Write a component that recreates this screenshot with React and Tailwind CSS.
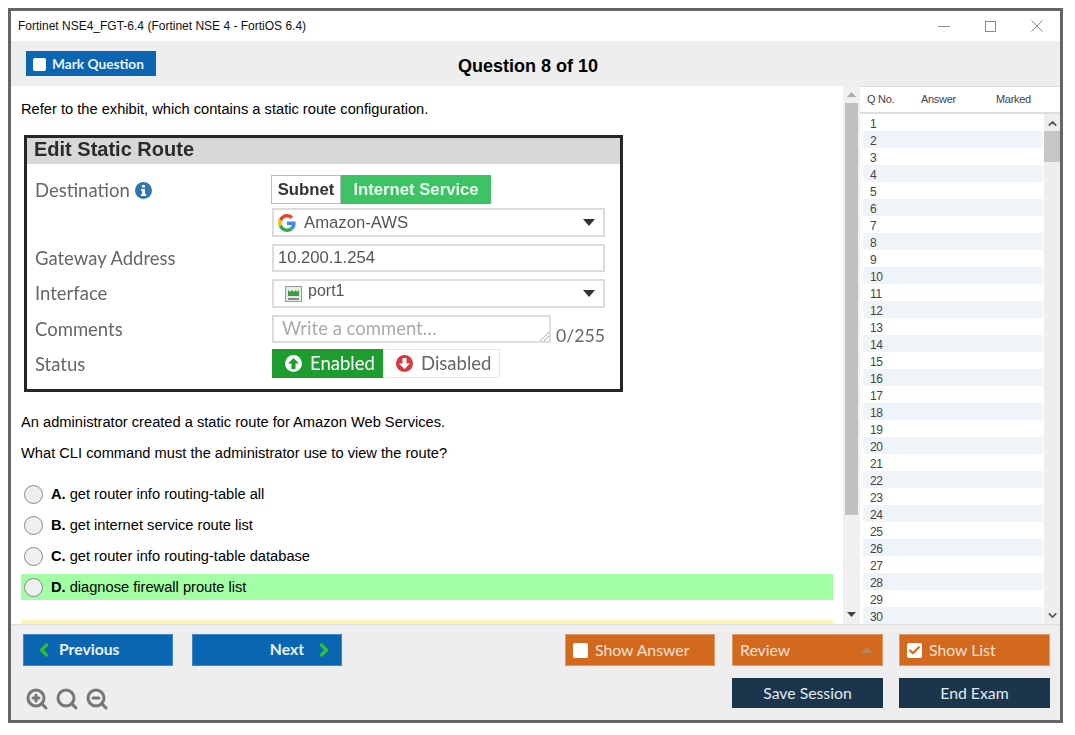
import React from "react";
import { ChevronLeft, ChevronRight, ChevronUp, ChevronDown, Check, Search, ZoomIn, ZoomOut } from "lucide-react";

const options = [
  ["A.", "get router info routing-table all"],
  ["B.", "get internet service route list"],
  ["C.", "get router info routing-table database"],
  ["D.", "diagnose firewall proute list"],
];

const rows = Array.from({ length: 30 }, (_, i) => i + 1);

const Caret = () => (
  <svg width="12" height="7" viewBox="0 0 12 7" className="ml-auto mr-[8px]">
    <path d="M0 0h12L6 7z" fill="#333" />
  </svg>
);

const Radio = () => <span className="h-[19px] w-[19px] shrink-0 rounded-full border border-[#8a8a8a] bg-[#efefef]" />;

const GoogleIcon = () => (
  <svg width="18" height="18" viewBox="0 0 48 48">
    <path fill="#ea4335" d="M24 9.5c3.5 0 6.700 1.200 9.200 3.600l6.900-6.900C35.900 2.400 30.400 0 24 0 14.600 0 6.500 5.400 2.600 13.200l8 6.200C12.500 13.700 17.800 9.500 24 9.500z" />
    <path fill="#4285f4" d="M47 24.500c0-1.600-.1-3.100-.4-4.500H24v9h12.900c-.6 3-2.200 5.500-4.700 7.200l7.700 6C44.400 37.900 47 31.800 47 24.500z" />
    <path fill="#fbbc05" d="M10.600 28.600A14.500 14.500 0 0 1 10.600 19.400l-8-6.200a24 24 0 0 0 0 21.600z" />
    <path fill="#34a853" d="M24 48c6.500 0 11.900-2.100 15.900-5.800l-7.700-6c-2.200 1.400-4.900 2.300-8.200 2.300-6.200 0-11.500-4.200-13.400-9.900l-8 6.200C6.500 42.600 14.600 48 24 48z" />
  </svg>
);

const Exhibit = () => (
  <div className="ml-[3px] mt-[17px] h-[257px] w-[599px] border-[3px] border-[#262626] bg-white font-['Lato',sans-serif] text-[18.5px] text-[#666] blur-[0.4px]">
    <div className="flex h-[26px] items-center bg-[#d8d8d8] pl-[7px] pb-[4px] font-['Liberation_Sans',sans-serif] text-[20px] font-bold text-[#2b2b2b]">
      Edit Static Route
    </div>
    <div className="flex pl-[8px] pt-[11px]">
      <div className="w-[237px] shrink-0">
        <div className="mt-[1px] flex h-[29px] items-center gap-[5px]">
          Destination
          <svg width="17" height="17" viewBox="0 0 17 17">
            <circle cx="8.500" cy="8.500" r="8.500" fill="#2f77ad" />
            <rect x="7" y="3" width="3" height="2.500" fill="#fff" />
            <path d="M6 7h4v5h1.200v2H6v-2h1.200V9H6z" fill="#fff" />
          </svg>
        </div>
        <div className="mt-[36px] flex h-[35px] items-center">Gateway Address</div>
        <div className="flex h-[36px] items-center">Interface</div>
        <div className="flex h-[35px] items-center">Comments</div>
        <div className="flex h-[35px] items-center">Status</div>
      </div>
      <div className="w-[333px] text-[#555]">
        <div className="-ml-[1px] flex h-[29px]">
          <div className="flex w-[70px] items-center justify-center border border-[#bbb] font-['Liberation_Sans',sans-serif] text-[16.7px] font-bold text-[#333]">Subnet</div>
          <div className="flex w-[150px] items-center justify-center bg-[#3cc464] font-['Liberation_Sans',sans-serif] text-[16.7px] font-bold text-[#eafff0]">Internet Service</div>
        </div>
        <div className="mt-[4px] flex h-[29px] items-center border-2 border-[#dcdcdc] pl-[4px] font-['Liberation_Sans',sans-serif] text-[16.7px]">
          <GoogleIcon />
          <span className="ml-[8px]">Amazon-AWS</span>
          <Caret />
        </div>
        <div className="mt-[7px] flex h-[28px] items-center border-2 border-[#dcdcdc] pl-[4px] font-['Liberation_Sans',sans-serif] text-[16.6px]">10.200.1.254</div>
        <div className="mt-[7px] flex h-[29px] items-center border-2 border-[#dcdcdc] pl-[11px] font-['Liberation_Sans',sans-serif] text-[16px]">
          <svg width="17" height="16" viewBox="0 0 17 16">
            <rect x="0.500" y="0.500" width="16" height="15" fill="#e4efe4" stroke="#999" />
            <path d="M3 10V4l2 2 2-2 1.500 2L11 4l1 2 2-2v6z" fill="#3c9a48" />
            <path d="M3 12h11v2H3z" fill="#888" />
          </svg>
          <span className="ml-[6px] -mt-[5px]">port1</span>
          <Caret />
        </div>
        <div className="mt-[7px] flex h-[34px] items-start">
          <div className="relative flex h-[28px] w-[279px] shrink-0 items-center border-2 border-[#dcdcdc] pl-[8px] text-[18.5px] text-[#aaa]">
            Write a comment…
            <svg width="9" height="9" viewBox="0 0 9 9" className="absolute bottom-0 right-0">
              <path d="M9 0 0 9M9 4 4 9" stroke="#aaa" />
            </svg>
          </div>
          <span className="ml-[5px] mt-[8px] text-[17.7px] text-[#666]">0/255</span>
        </div>
        <div className="flex h-[29px]">
          <div className="flex w-[111px] items-center gap-[8px] bg-[#1d9c30] pl-[13px] text-white">
            <svg width="17" height="17" viewBox="0 0 17 17">
              <circle cx="8.500" cy="8.500" r="8.500" fill="#fff" />
              <path d="M8.500 3 14 8.500h-3.500V14h-4V8.500H3z" fill="#1d9c30" />
            </svg>
            Enabled
          </div>
          <div className="flex w-[117px] items-center gap-[8px] border border-[#e8e8e8] pl-[12px] text-[#666]">
            <svg width="17" height="17" viewBox="0 0 17 17">
              <circle cx="8.500" cy="8.500" r="8.500" fill="#d83a3a" />
              <path d="M8.500 14 3 8.500h3.500V3h4v5.500H14z" fill="#fff" />
            </svg>
            Disabled
          </div>
        </div>
      </div>
    </div>
  </div>
);

const QuestionPane = () => (
  <div className="flex min-w-0 flex-1 bg-white">
    <div className="w-[822px] overflow-hidden pl-[10px] font-['Liberation_Sans',sans-serif] text-[14.67px] text-black">
      <p className="mt-[14px] h-[18px] leading-[18px]">Refer to the exhibit, which contains a static route configuration.</p>
      <Exhibit />
      <p className="mt-[21px] h-[18px] leading-[18px]">An administrator created a static route for Amazon Web Services.</p>
      <p className="mt-[13px] h-[18px] leading-[18px]">What CLI command must the administrator use to view the route?</p>
      <div className="mt-[19px] flex flex-col gap-[5px]">
        {options.map(([letter, text]) => (
          <div key={letter} className={`flex h-[26px] items-center pl-[3px] ${letter === "D." ? "bg-[#a3ffa3]" : ""}`}>
            <Radio />
            <span className="ml-[8px] font-bold">{letter}</span>
            <span className="ml-[4px]">{text}</span>
          </div>
        ))}
      </div>
      <div className="mt-[20px] h-[4px] bg-[#fdf4b8]" />
    </div>
    <div className="ml-[10px] flex w-[17px] flex-col items-center bg-[#f0f0f0]">
      <svg width="9" height="5" viewBox="0 0 9 5" className="mt-[6px]"><path d="M0 5h9L4.500 0z" fill="#aaa" /></svg>
      <div className="mt-[6px] h-[412px] w-[13px] bg-[#c0c0c0]" />
      <svg width="9" height="5" viewBox="0 0 9 5" className="mt-[97px]"><path d="M0 0h9L4.500 5z" fill="#444" /></svg>
    </div>
  </div>
);

const QuestionList = () => (
  <div className="flex w-[200px] shrink-0 flex-col border-t border-[#dedede] bg-white font-['Liberation_Sans',sans-serif] text-[11px] text-[#444]">
    <div className="flex h-[27px] shrink-0 items-center border-b-2 border-[#dedede] pb-[1px] tracking-[-0.3px]">
      <span className="ml-[7px] w-[54px]">Q No.</span>
      <span className="w-[75px]">Answer</span>
      <span>Marked</span>
    </div>
    <div className="flex min-h-0 flex-1 pl-[3px]">
      <div className="w-[180px] overflow-hidden">
        {rows.map((n) => (
          <div key={n} className={`flex h-[17px] shrink-0 items-center pl-[7px] pt-[2px] text-[12px] tracking-[-0.3px] ${n % 2 === 0 ? "bg-[#eff4f8]" : ""}`}>
            {n}
          </div>
        ))}
      </div>
      <div className="ml-[1px] flex w-[16px] flex-col items-center bg-[#eeeeee]">
        <ChevronUp size={13} strokeWidth={3} className="mt-[3px] text-[#555]" />
        <div className="mt-[1px] h-[31px] w-full bg-[#c6c6c6]" />
        <ChevronDown size={13} strokeWidth={3} className="mt-[447px] text-[#555]" />
      </div>
    </div>
  </div>
);

const Footer = () => (
  <div className="h-[96px] shrink-0 border-t border-[#dedede] bg-[#eeeeee] px-[12px] pt-[9px] pr-[10px] font-['Lato',sans-serif]">
    <div className="flex h-[32px]">
      <button className="flex w-[150px] items-center border border-[#3f86c4] bg-[#0b66b2] pl-[10px] text-[15.7px] font-bold text-[#e8f2fa]">
        <ChevronLeft size={20} strokeWidth={4} className="text-[#2fc02f]" />
        <span className="ml-[5px]">Previous</span>
      </button>
      <button className="ml-[19px] flex w-[150px] items-center justify-end border border-[#3f86c4] bg-[#0b66b2] pr-[7px] text-[15.7px] font-bold text-[#e8f2fa]">
        <span className="mr-[10px]">Next</span>
        <ChevronRight size={20} strokeWidth={4} className="text-[#2fc02f]" />
      </button>
      <button className="ml-[223px] flex w-[150px] items-center border border-[#e09a66] bg-[#d2691e] pl-[7px] text-[15.8px] text-[#f6e3d4]">
        <span className="h-[15px] w-[15px] rounded-[2px] bg-white" />
        <span className="ml-[7px]">Show Answer</span>
      </button>
      <button className="ml-[17px] flex w-[151px] items-center border border-[#e09a66] bg-[#d2691e] pl-[7px] text-[15.8px] text-[#f6e3d4]">
        Review
        <svg width="12" height="6" viewBox="0 0 12 6" className="ml-auto mr-[9px]"><path d="M0 6h12L6 0z" fill="#b9825c" /></svg>
      </button>
      <button className="ml-[16px] flex w-[151px] items-center border border-[#e09a66] bg-[#d2691e] pl-[7px] text-[15.8px] text-[#f6e3d4]">
        <span className="flex h-[15px] w-[15px] items-center justify-center rounded-[2px] bg-white">
          <Check size={13} strokeWidth={4} className="text-[#d2691e]" />
        </span>
        <span className="ml-[7px]">Show List</span>
      </button>
    </div>
    <div className="mt-[12px] flex h-[30px]">
      <div className="flex items-center gap-[6px] pl-[2px] pt-[12px] text-[#777]">
        <ZoomIn size={24} strokeWidth={3} />
        <Search size={24} strokeWidth={3} />
        <ZoomOut size={24} strokeWidth={3} />
      </div>
      <button className="ml-auto w-[151px] bg-[#1b364c] text-[15.8px] text-[#e4ebf0]">Save Session</button>
      <button className="ml-[16px] w-[151px] bg-[#1b364c] text-[15.8px] text-[#e4ebf0]">End Exam</button>
    </div>
  </div>
);

export default function App() {
  return (
    <div className="h-[735px] w-[1075px] overflow-hidden bg-white pl-[8px] pt-[8px]">
      <div className="flex h-[715px] w-[1055px] flex-col border-[3px] border-[#666]">
        <div className="flex h-[30px] shrink-0 items-center bg-white pl-[7px] font-['Liberation_Sans',sans-serif] text-[12px] text-[#111]">
          Fortinet NSE4_FGT-6.4 (Fortinet NSE 4 - FortiOS 6.4)
          <div className="ml-auto flex items-center gap-[35px] pr-[17px]">
            <svg width="12" height="1" viewBox="0 0 12 1"><path d="M0 .5h12" stroke="#888" /></svg>
            <svg width="11" height="11" viewBox="0 0 11 11"><rect x=".5" y=".5" width="10" height="10" fill="none" stroke="#888" /></svg>
            <svg width="12" height="12" viewBox="0 0 12 12"><path d="M.5.5l11 11M11.500.5l-11 11" stroke="#888" /></svg>
          </div>
        </div>
        <div className="relative flex h-[45px] shrink-0 items-center bg-[#eeeeee] pl-[15px]">
          <button className="flex h-[25px] w-[130px] items-center bg-[#0b66b2] pl-[7px] pt-[1px] font-['Lato',sans-serif] text-[13.7px] font-bold text-[#e8f2fa]">
            <span className="h-[13px] w-[13px] rounded-[2px] bg-white" />
            <span className="ml-[6px]">Mark Question</span>
          </button>
          <span className="absolute left-[447px] top-[12px] font-['Liberation_Sans',sans-serif] text-[18px] font-bold text-black">Question 8 of 10</span>
        </div>
        <div className="flex min-h-0 flex-1">
          <QuestionPane />
          <QuestionList />
        </div>
        <Footer />
      </div>
    </div>
  );
}
